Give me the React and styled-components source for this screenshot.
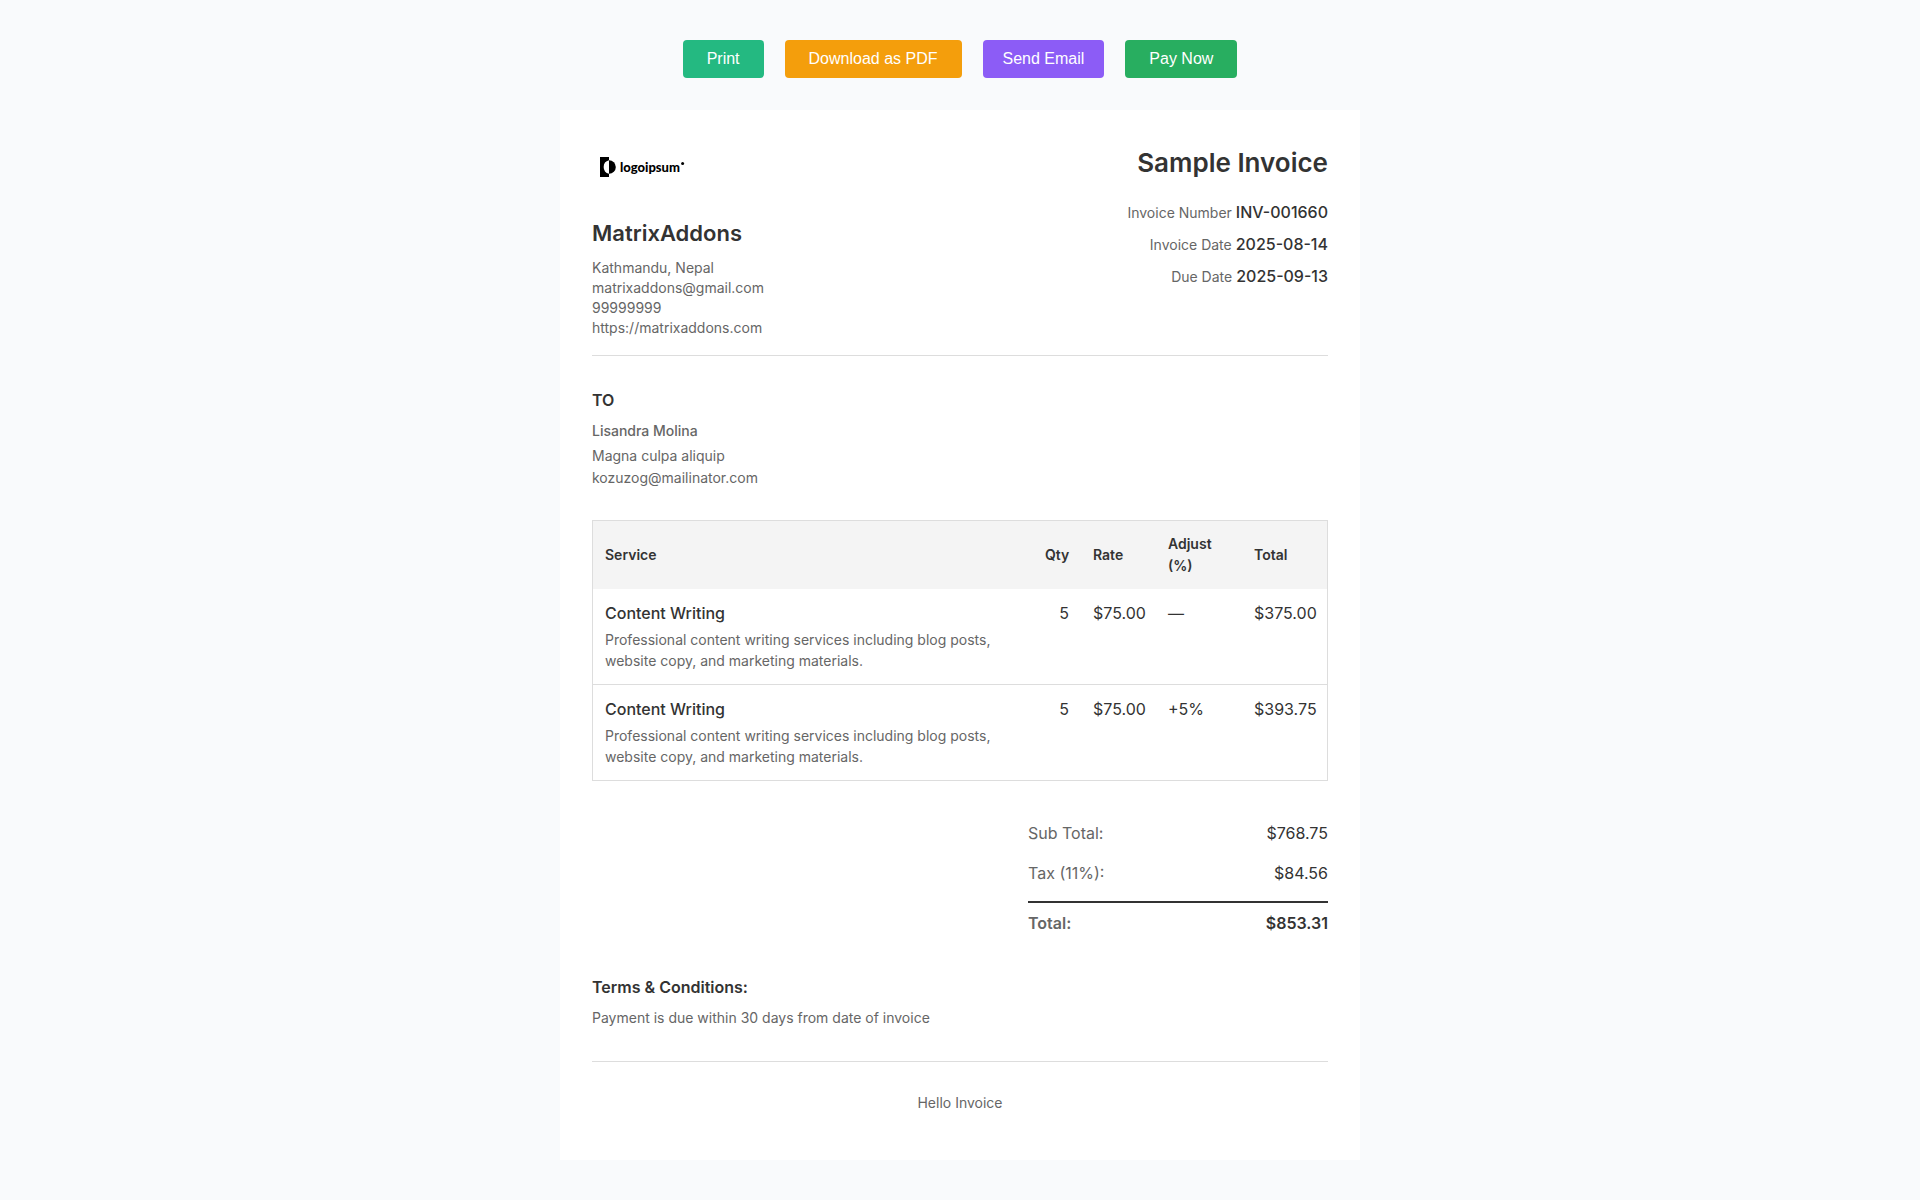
import React from "react";
import styled, { createGlobalStyle } from "styled-components";

const GlobalStyle = createGlobalStyle`
  * { box-sizing: border-box; }
  body {
    margin: 0;
    background: #f9fafc;
    color: #333;
    font-family: Inter, "Liberation Sans", sans-serif;
    font-size: 16px;
    line-height: 24px;
  }
  h1, h2, h3, p, dl, dd, address { margin: 0; }
`;

const Page = styled.main`
  display: flex;
  flex-direction: column;
  align-items: center;
  gap: 32px;
  padding: 40px 16px;
`;

const Toolbar = styled.div`
  display: flex;
  flex-wrap: wrap;
  justify-content: center;
  gap: 21px;
`;

const ActionButton = styled.button`
  padding: 10px ${(p) => (p.$compact ? 20 : 24)}px;
  border: 0;
  border-radius: 4px;
  background: ${(p) => p.$color};
  color: #fff;
  font: 16px/18px "Liberation Sans", Arial, sans-serif;
  cursor: pointer;
`;

const Sheet = styled.article`
  width: 100%;
  max-width: 800px;
  padding: 32px 32px 46px;
  background: #fff;
`;

const Header = styled.header`
  display: flex;
  justify-content: space-between;
  padding-bottom: 17px;
  border-bottom: 1px solid #ddd;
`;

const Logo = styled.svg`
  display: block;
  width: 100px;
  height: 50px;
  margin-bottom: 25px;
`;

const LogoText = styled.text`
  font-family: Lato, sans-serif;
  font-size: 13px;
  font-weight: 900;
`;

const CompanyName = styled.h2`
  margin-bottom: 9px;
  font-size: 22px;
  line-height: 32px;
  font-weight: 600;
`;

const Address = styled.address`
  color: #666;
  font-size: 14px;
  line-height: 20px;
  font-style: normal;
`;

const Meta = styled.div`
  text-align: right;
`;

const Title = styled.h1`
  margin-bottom: 12px;
  font-size: 26px;
  line-height: 42px;
  font-weight: 600;
`;

const MetaRow = styled.div`
  display: flex;
  justify-content: flex-end;
  align-items: baseline;
  gap: 4px;
  height: 32px;
  line-height: 32px;

  dt { color: #666; font-size: 14px; }
  dd { font-weight: 500; }
`;

const Recipient = styled.section`
  padding: 32px 0 31px;
  color: #666;
  font-size: 14px;
  line-height: 22px;
`;

const SectionTitle = styled.h3`
  margin-bottom: 8px;
  color: #333;
  font-size: 16px;
  line-height: 24px;
  font-weight: 600;
`;

const RecipientName = styled.p`
  margin-bottom: 3px;
  font-weight: 500;
`;

const Items = styled.table`
  width: 100%;
  border: 1px solid #ddd;
  border-spacing: 0;
  table-layout: fixed;
`;

const Col = styled.col`
  width: ${(p) => p.$width};
`;

const HeadCell = styled.th`
  padding: 12px;
  background: #f4f4f4;
  font-size: 14px;
  line-height: 22px;
  font-weight: 600;
  text-align: ${(p) => (p.$right ? "right" : "left")};
`;

const Cell = styled.td`
  padding: 12px 12px 13px;
  vertical-align: top;
  text-align: ${(p) => (p.$right ? "right" : "left")};

  tr + tr > & { border-top: 1px solid #ddd; }
`;

const ItemName = styled.div`
  margin-bottom: 4px;
  font-weight: 500;
`;

const ItemNote = styled.div`
  max-width: 400px;
  color: #666;
  font-size: 14px;
  line-height: 21px;
`;

const Totals = styled.dl`
  max-width: 300px;
  margin: 32px 0 0 auto;
`;

const TotalRow = styled.div`
  display: flex;
  justify-content: space-between;
  padding: 8px 0;

  dt { color: #666; }
`;

const GrandTotal = styled(TotalRow)`
  margin-top: 8px;
  border-top: 2px solid #333;
  font-weight: 600;
`;

const Terms = styled.section`
  padding: 32px 0;
  border-bottom: 1px solid #ddd;
`;

const Note = styled.p`
  color: #666;
  font-size: 14px;
  line-height: 22px;
`;

const Footer = styled.footer`
  padding-top: 30px;
  text-align: center;
`;

const actions = [
  { label: "Print", color: "#24b981" },
  { label: "Download as PDF", color: "#f49e0c" },
  { label: "Send Email", color: "#8c5cf6", compact: true },
  { label: "Pay Now", color: "#28ae60" },
];

const meta = [
  ["Invoice Number", "INV-001660"],
  ["Invoice Date", "2025-08-14"],
  ["Due Date", "2025-09-13"],
];

const note =
  "Professional content writing services including blog posts, website copy, and marketing materials.";

const items = [
  { name: "Content Writing", note, qty: 5, rate: "$75.00", adjust: "—", total: "$375.00" },
  { name: "Content Writing", note, qty: 5, rate: "$75.00", adjust: "+5%", total: "$393.75" },
];

export default function App() {
  return (
    <>
      <GlobalStyle />
      <Page>
        <Toolbar>
          {actions.map((a) => (
            <ActionButton key={a.label} type="button" $color={a.color} $compact={a.compact}>
              {a.label}
            </ActionButton>
          ))}
        </Toolbar>
        <Sheet>
          <Header>
            <div>
              <Logo viewBox="0 0 100 50" role="img" aria-label="logoipsum">
                <path d="M8 15h9v3.2a7 7 0 0 0 0 13.6V35H8z" />
                <path d="M17 18.2a6.8 6.8 0 0 1 0 13.6z" />
                <LogoText x="28" y="30">logoipsum</LogoText>
                <circle cx="90.6" cy="21.5" r="1.5" />
              </Logo>
              <CompanyName>MatrixAddons</CompanyName>
              <Address>
                Kathmandu, Nepal
                <br />
                matrixaddons@gmail.com
                <br />
                99999999
                <br />
                https://matrixaddons.com
              </Address>
            </div>
            <Meta>
              <Title>Sample Invoice</Title>
              <dl>
                {meta.map(([label, value]) => (
                  <MetaRow key={label}>
                    <dt>{label}</dt>
                    <dd>{value}</dd>
                  </MetaRow>
                ))}
              </dl>
            </Meta>
          </Header>
          <Recipient>
            <SectionTitle>TO</SectionTitle>
            <RecipientName>Lisandra Molina</RecipientName>
            <p>Magna culpa aliquip</p>
            <p>kozuzog@mailinator.com</p>
          </Recipient>
          <Items>
            <colgroup>
              <Col $width="auto" />
              <Col $width="48px" />
              <Col $width="75px" />
              <Col $width="86px" />
              <Col $width="85px" />
            </colgroup>
            <thead>
              <tr>
                <HeadCell scope="col">Service</HeadCell>
                <HeadCell scope="col" $right>Qty</HeadCell>
                <HeadCell scope="col">Rate</HeadCell>
                <HeadCell scope="col">Adjust (%)</HeadCell>
                <HeadCell scope="col">Total</HeadCell>
              </tr>
            </thead>
            <tbody>
              {items.map((item, i) => (
                <tr key={i}>
                  <Cell>
                    <ItemName>{item.name}</ItemName>
                    <ItemNote>{item.note}</ItemNote>
                  </Cell>
                  <Cell $right>{item.qty}</Cell>
                  <Cell>{item.rate}</Cell>
                  <Cell>{item.adjust}</Cell>
                  <Cell>{item.total}</Cell>
                </tr>
              ))}
            </tbody>
          </Items>
          <Totals>
            <TotalRow>
              <dt>Sub Total:</dt>
              <dd>$768.75</dd>
            </TotalRow>
            <TotalRow>
              <dt>Tax (11%):</dt>
              <dd>$84.56</dd>
            </TotalRow>
            <GrandTotal>
              <dt>Total:</dt>
              <dd>$853.31</dd>
            </GrandTotal>
          </Totals>
          <Terms>
            <SectionTitle>Terms &amp; Conditions:</SectionTitle>
            <Note>Payment is due within 30 days from date of invoice</Note>
          </Terms>
          <Footer>
            <Note>Hello Invoice</Note>
          </Footer>
        </Sheet>
      </Page>
    </>
  );
}
